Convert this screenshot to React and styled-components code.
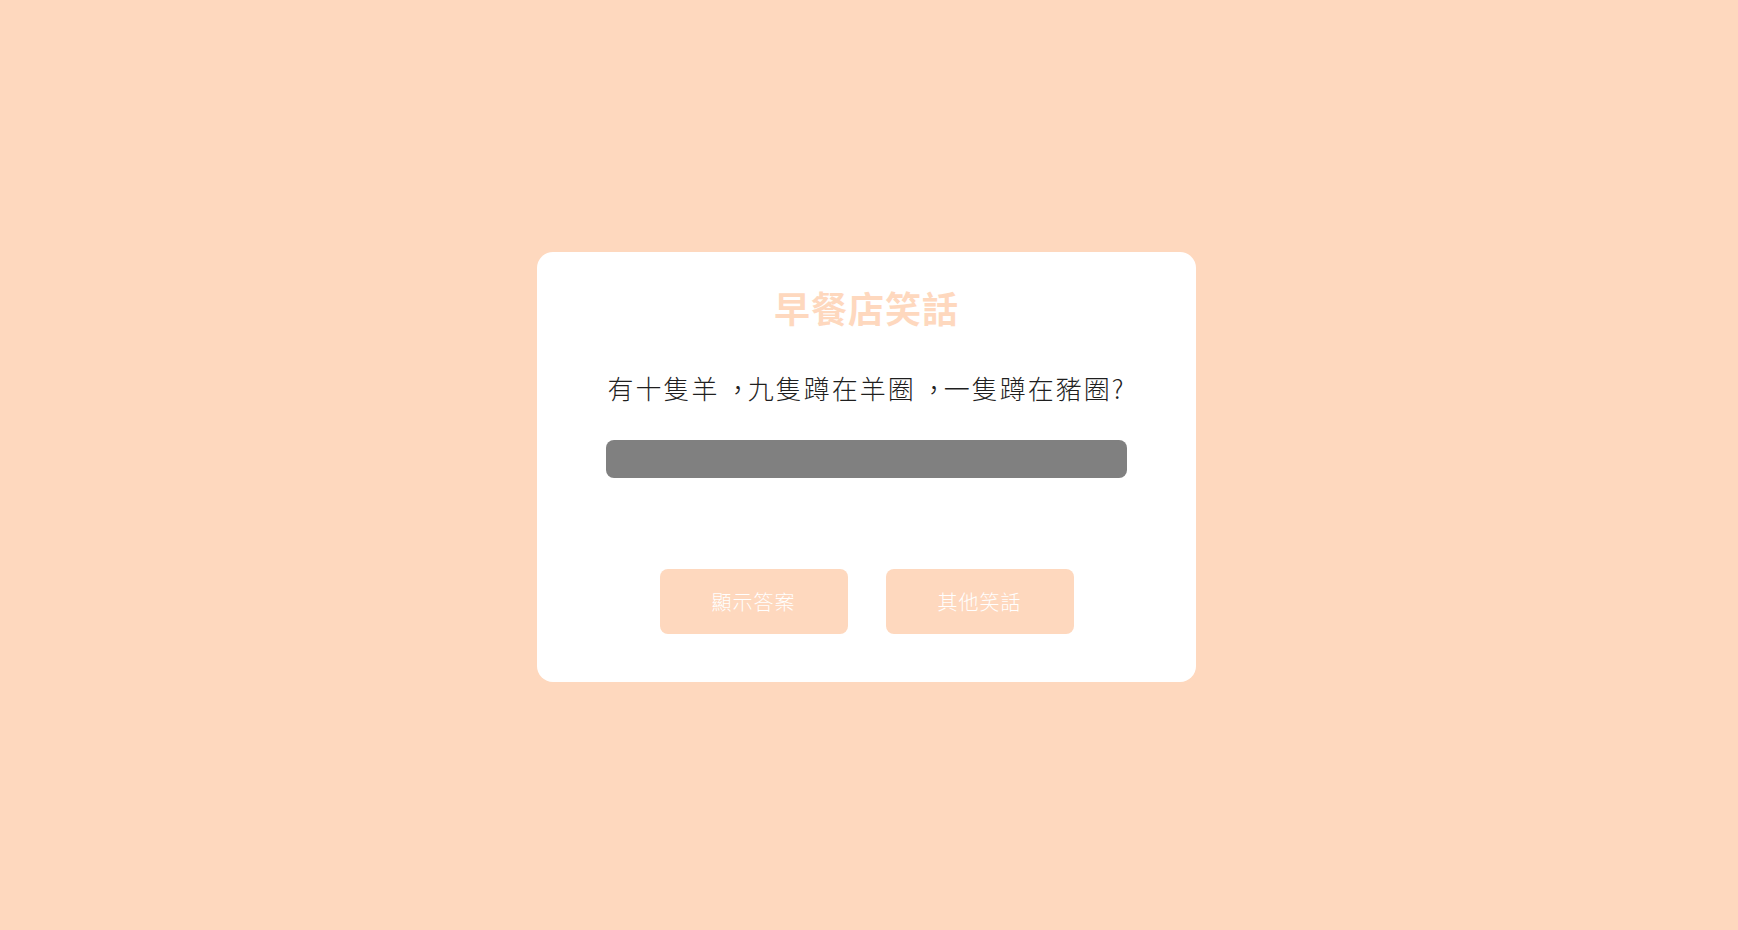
import React from 'react'
import styled, { createGlobalStyle } from 'styled-components'

const GlobalStyle = createGlobalStyle`
html, body {
    margin: 0;
    padding: 0;
}
body {
    background-color: #fed8be;
    font-family: "Noto Sans CJK TC", "Noto Sans", sans-serif;
}
`

const Page = styled.div`
width: 100%;
height: 100vh;
display: flex;
align-items: center;
justify-content: center;
padding: 4px 5px 0 0;
box-sizing: border-box;
`
const Card = styled.div`
width: 659px;
box-sizing: border-box;
padding: 34px 69px 48px 69px;
background-color: #fff;
border-radius: 16px;
display: flex;
flex-direction: column;
align-items: center;
`
const Title = styled.h1`
margin: 0;
font-size: 36px;
line-height: 43px;
font-weight: 700;
letter-spacing: 1px;
color: #fed8be;
`
const Question = styled.p`
margin: 41px 0 0 0;
width: 100%;
text-align: center;
font-size: 26px;
line-height: 36px;
font-weight: 300;
letter-spacing: 2px;
color: #1f1f1f;
white-space: nowrap;
`
// taiwan style comma sits in the middle of its box
const Comma = styled.span`
display: inline-block;
padding-left: 0.2em;
letter-spacing: calc(2px - 0.2em);
transform: translateY(0.04em);
`
const Answer = styled.div`
margin-top: 34px;
width: 100%;
height: 38px;
border-radius: 8px;
background-color: #808080;
`
const ButtonRow = styled.div`
margin-top: 91px;
display: flex;
gap: 38px;
`
const JokeButton = styled.button`
width: 188px;
height: 65px;
border: none;
outline: none;
border-radius: 8px;
background-color: #fed8be;
color: #fff;
font-family: "Noto Sans CJK TC", "Noto Sans", sans-serif;
font-size: 20px;
font-weight: 300;
letter-spacing: 1px;
cursor: pointer;
`

const App = () => {
    return (
        <>
            <GlobalStyle />
            <Page lang="zh-Hant-TW">
                <Card>
                    <Title>早餐店笑話</Title>
                    <Question>
                        有十隻羊<Comma>，</Comma>九隻蹲在羊圈<Comma>，</Comma>一隻蹲在豬圈?
                    </Question>
                    <Answer />
                    <ButtonRow>
                        <JokeButton>顯示答案</JokeButton>
                        <JokeButton>其他笑話</JokeButton>
                    </ButtonRow>
                </Card>
            </Page>
        </>
    )
}

export default App
